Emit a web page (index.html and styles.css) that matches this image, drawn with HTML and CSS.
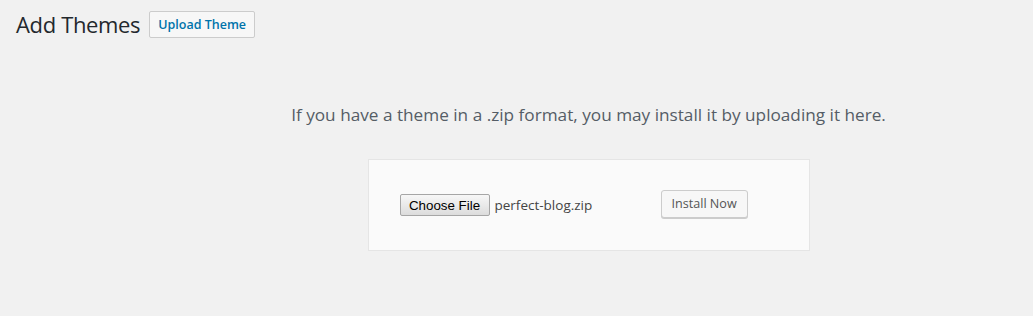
FILE: index.html
```html
<!DOCTYPE html>
<html lang="en">
<head>
  <meta charset="UTF-8">
  <meta name="viewport" content="width=device-width, initial-scale=1.0">
  <title>Add Themes</title>
  <link rel="stylesheet" href="styles.css">
</head>
<body>
  <div class="wrap">
    <div class="page-header">
      <h1>Add Themes</h1>
      <button class="page-title-action">Upload Theme</button>
    </div>
    <div class="upload-theme">
      <p class="install-help">If you have a theme in a .zip format, you may install it by uploading it here.</p>
      <form class="upload-form" onsubmit="return false">
        <div class="file-field">
          <button type="button" class="choose-file">Choose File</button>
          <span class="file-name">perfect-blog.zip</span>
        </div>
        <button type="submit" class="button">Install Now</button>
      </form>
    </div>
  </div>
</body>
</html>
```

FILE: styles.css
```css
body {
  margin: 0;
  background-color: #f1f1f1;
  font-family: "Open Sans", "Noto Sans", sans-serif;
  color: #444;
}
.wrap {
  padding: 0 16px;
}
.page-header {
  display: flex;
  align-items: center;
  padding: 9px 0 4px;
}
h1 {
  margin: 0;
  font-size: 22px;
  font-weight: 400;
  letter-spacing: -0.35px;
  line-height: 30px;
  color: #23282d;
}
.page-title-action {
  margin-left: 9px;
  padding: 4px 8px;
  font-family: inherit;
  font-size: 12.5px;
  font-weight: 600;
  line-height: 17px;
  color: #0073aa;
  background-color: #f7f7f7;
  border: 1px solid #ccc;
  border-radius: 2px;
  cursor: pointer;
}
.upload-theme {
  margin: 0 -16px 0 128px;
  padding-top: 58px;
  text-align: center;
}
.install-help {
  margin: 0;
  font-size: 17.2px;
  line-height: 28px;
  color: #555d66;
}
.upload-form {
  display: inline-flex;
  align-items: flex-start;
  margin-top: 30px;
  padding: 30px;
  width: 380px;
  height: 30px;
  background-color: #fafafa;
  border: 1px solid #e5e5e5;
}
.file-field {
  display: flex;
  align-items: center;
  width: 254px;
  margin-top: 4px;
  padding-left: 1px;
  box-sizing: border-box;
}
.choose-file {
  width: 90px;
  height: 22px;
  padding: 0;
  font-family: "Liberation Sans", Arial, sans-serif;
  font-size: 13.33px;
  color: #000;
  background: linear-gradient(#f7f7f7, #dcdcdc);
  border: 1px solid #a6a6a6;
  border-radius: 2px;
}
.file-name {
  margin-left: 5px;
  font-size: 13.5px;
  color: #444;
}
.button {
  margin-left: 8px;
  height: 28px;
  padding: 0 10px;
  font-family: inherit;
  font-size: 12.6px;
  line-height: 26px;
  color: #555;
  background-color: #f7f7f7;
  border: 1px solid #ccc;
  border-radius: 3px;
  box-shadow: 0 1px 0 #ccc;
  cursor: pointer;
}
```
